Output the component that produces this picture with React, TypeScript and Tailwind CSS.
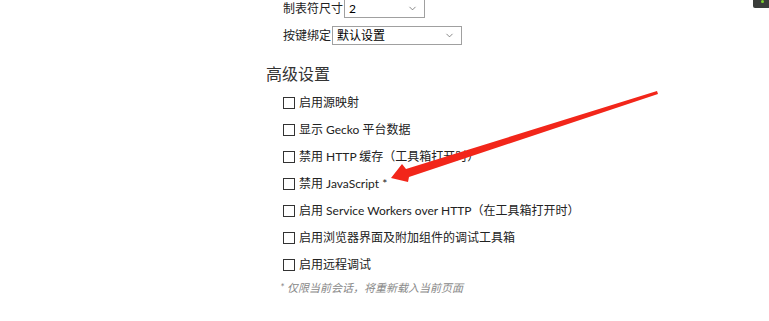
import { ChevronDown } from "lucide-react";

const font = { fontFamily: '"Segoe UI", Lato, "Noto Sans CJK SC", sans-serif' };

const options = [
  "启用源映射",
  "显示 Gecko 平台数据",
  "禁用 HTTP 缓存（工具箱打开时）",
  "禁用 JavaScript *",
  "启用 Service Workers over HTTP（在工具箱打开时）",
  "启用浏览器界面及附加组件的调试工具箱",
  "启用远程调试",
];

function Select({ value, width }: { value: string; width: string }) {
  return (
    <div className={`flex h-[19px] items-center justify-between border border-[#a0a0a0] bg-white pl-[4px] pr-[6px] ${width}`}>
      <span className="text-[12px] leading-none text-black">{value}</span>
      <ChevronDown className="h-[11px] w-[11px] text-[#555]" strokeWidth={1.5} />
    </div>
  );
}

export default function App() {
  return (
    <div className="relative h-[321px] w-[769px] overflow-hidden bg-white text-[#222]" style={font}>
      <div className="flex flex-col pl-[266px]">
        <div className="-mt-[1px] flex flex-col gap-[8px] pl-[17px]">
          <div className="flex items-center gap-[1px]">
            <span className="text-[12px]">制表符尺寸</span>
            <Select value="2" width="w-[81px]" />
          </div>
          <div className="flex items-center gap-[1px]">
            <span className="text-[12px]">按键绑定</span>
            <Select value="默认设置" width="w-[130px]" />
          </div>
        </div>

        <h2 className="mt-[19px] text-[16px] leading-[20px] text-[#333]">高级设置</h2>

        <div className="mt-[10px] flex flex-col gap-[9px] pl-[17px]">
          {options.map((o) => (
            <label key={o} className="flex h-[18px] items-center gap-[4px] text-[12px]">
              <span className="h-[12px] w-[12px] shrink-0 border border-[#333] bg-white" />
              <span>{o}</span>
            </label>
          ))}
        </div>

        <p className="mt-[6px] pl-[14px] text-[11px] italic text-[#888]">* 仅限当前会话，将重新载入当前页面</p>
      </div>

      {/* annotation arrow */}
      <svg className="absolute left-0 top-0" width="769" height="321">
        <polygon
          points="391,178 402,164 406,169 657,91 658,94 409,177 408,182"
          fill="#f2261a"
        />
      </svg>

      {/* corner thumbnail */}
      <div className="absolute right-0 top-0 h-[8px] w-[16px] rounded-bl-[2px] bg-[#3a3d3a]">
        <span className="absolute right-[5px] top-0 h-[3px] w-[3px] rounded-full bg-[#7cd12e]" />
      </div>
    </div>
  );
}
